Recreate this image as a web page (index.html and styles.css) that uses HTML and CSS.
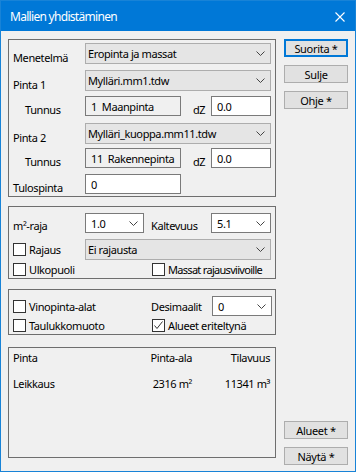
FILE: index.html
```html
<!DOCTYPE html>
<html lang="fi">
<head>
  <meta charset="UTF-8">
  <meta name="viewport" content="width=device-width, initial-scale=1.0">
  <title>Mallien yhdistäminen</title>
  <link rel="stylesheet" href="styles.css">
</head>
<body>

  <div class="window">
    <!-- otsikkopalkki -->
    <div class="titlebar">
      <span class="title">Mallien yhdistäminen</span>
      <svg class="close" width="10" height="10" viewBox="0 0 10 10">
        <path d="M0.5 0.5 L9.5 9.5 M9.5 0.5 L0.5 9.5" stroke="#fff" stroke-width="1.1" fill="none"/>
      </svg>
    </div>

    <div class="dialog">
      <div class="main">

        <!-- pinnat -->
        <div class="group g-pinnat">
          <div class="row r1">
            <span class="lbl">Menetelmä</span>
            <div class="combo gray w-wide"><span>Eropinta ja massat</span><svg class="chev" width="9" height="5" viewBox="0 0 9 5"><path d="M0.5 0.5 L4.5 4.5 L8.5 0.5" stroke="#444" fill="none"/></svg></div>
          </div>
          <div class="row r2">
            <span class="lbl">Pinta 1</span>
            <div class="combo gray w-wide"><span>Mylläri.mm1.tdw</span><svg class="chev" width="9" height="5" viewBox="0 0 9 5"><path d="M0.5 0.5 L4.5 4.5 L8.5 0.5" stroke="#444" fill="none"/></svg></div>
          </div>
          <div class="row r3">
            <span class="lbl sub">Tunnus</span>
            <div class="field ro w-tunnus">1&nbsp; Maanpinta</div>
            <span class="dz">dZ</span>
            <div class="field w-dz">0.0</div>
          </div>
          <div class="row r4">
            <span class="lbl">Pinta 2</span>
            <div class="combo gray w-wide"><span>Mylläri_kuoppa.mm11.tdw</span><svg class="chev" width="9" height="5" viewBox="0 0 9 5"><path d="M0.5 0.5 L4.5 4.5 L8.5 0.5" stroke="#444" fill="none"/></svg></div>
          </div>
          <div class="row r5">
            <span class="lbl sub">Tunnus</span>
            <div class="field ro w-tunnus">11&nbsp; Rakennepinta</div>
            <span class="dz">dZ</span>
            <div class="field w-dz">0.0</div>
          </div>
          <div class="row r6">
            <span class="lbl">Tulospinta</span>
            <div class="field w-tunnus">0</div>
          </div>
        </div>

        <!-- rajaus -->
        <div class="group g-rajaus">
          <div class="row r7">
            <span class="lbl">m²-raja</span>
            <div class="combo w-small"><span>1.0</span><svg class="chev" width="9" height="5" viewBox="0 0 9 5"><path d="M0.5 0.5 L4.5 4.5 L8.5 0.5" stroke="#444" fill="none"/></svg></div>
            <span class="lbl2">Kaltevuus</span>
            <div class="combo w-dz"><span>5.1</span><svg class="chev" width="9" height="5" viewBox="0 0 9 5"><path d="M0.5 0.5 L4.5 4.5 L8.5 0.5" stroke="#444" fill="none"/></svg></div>
          </div>
          <div class="row r8">
            <label class="check lbl"><span class="box"></span>Rajaus</label>
            <div class="combo gray w-wide"><span>Ei rajausta</span><svg class="chev" width="9" height="5" viewBox="0 0 9 5"><path d="M0.5 0.5 L4.5 4.5 L8.5 0.5" stroke="#444" fill="none"/></svg></div>
          </div>
          <div class="row r9">
            <label class="check col1"><span class="box"></span>Ulkopuoli</label>
            <label class="check tight"><span class="box"></span>Massat rajausviivoille</label>
          </div>
        </div>

        <!-- tulostus -->
        <div class="group g-tulostus">
          <div class="row r10">
            <label class="check col1"><span class="box"></span>Vinopinta-alat</label>
            <span class="lbl2">Desimaalit</span>
            <div class="combo w-dz"><span>0</span><svg class="chev" width="9" height="5" viewBox="0 0 9 5"><path d="M0.5 0.5 L4.5 4.5 L8.5 0.5" stroke="#444" fill="none"/></svg></div>
          </div>
          <div class="row r11">
            <label class="check col1"><span class="box"></span>Taulukkomuoto</label>
            <label class="check"><span class="box"><svg width="11" height="11" viewBox="0 0 11 11"><path d="M1.5 5.5 L4 8.5 L9.5 1.5" stroke="#333" fill="none"/></svg></span>Alueet eriteltynä</label>
          </div>
        </div>

        <!-- tulokset -->
        <div class="group g-tulos">
          <div class="result">
            <span>Pinta</span><span class="num">Pinta-ala</span><span class="num">Tilavuus</span>
            <span>Leikkaus</span><span class="num">2316 m²</span><span class="num">11341 m³</span>
          </div>
        </div>

      </div>

      <!-- painikkeet -->
      <div class="buttons">
        <div class="btn-top">
          <button class="btn default">Suorita *</button>
          <button class="btn">Sulje</button>
          <button class="btn">Ohje *</button>
        </div>
        <div class="btn-bottom">
          <button class="btn">Alueet *</button>
          <button class="btn">Näytä *</button>
        </div>
      </div>
    </div>
  </div>

</body>
</html>
```

FILE: styles.css
```css
body {
  margin: 0;
  padding: 0;
  font-family: "Noto Sans", Arial, sans-serif;
  font-size: 11px;
  letter-spacing: -0.4px;
  color: #000;
  background-color: #f0f0f0;
}
/* ikkuna */
.window {
  width: 356px;
  height: 472px;
  box-sizing: border-box;
  border: 1px solid #1883d7;
  background-color: #f0f0f0;
  display: flex;
  flex-direction: column;
}
.titlebar {
  height: 30px;
  background-color: #0078d7;
  display: flex;
  align-items: center;
  justify-content: space-between;
  padding: 0 10px 0 9px;
  flex-shrink: 0;
}
.title {
  color: white;
  font-size: 12px;
  letter-spacing: -0.7px;
}
.close {
  margin-top: 1px;
}
/* sisältö */
.dialog {
  flex: 1;
  display: flex;
  gap: 8px;
  padding: 8px 7px 5px 7px;
}
.main {
  width: 268px;
  display: flex;
  flex-direction: column;
}
.group {
  box-sizing: border-box;
  border: 1px solid #6e6e6e;
  padding: 0 4px;
}
.g-pinnat { height: 158px; padding-top: 3px; }
.g-rajaus { height: 73px; margin-top: 9px; padding-top: 6px; }
.g-tulostus { height: 46px; margin-top: 10px; padding-top: 6px; }
.g-tulos { height: 111px; margin-top: 12px; padding-top: 1px; }
.row {
  display: flex;
  align-items: center;
}
.r1, .r2, .r4, .r8 { height: 21px; }
.r3, .r5, .r6, .r7, .r10 { height: 20px; }
.r2 { margin-top: 6px; }
.r3 { margin-top: 5px; }
.r4 { margin-top: 7px; }
.r5 { margin-top: 4px; }
.r6 { margin-top: 6px; }
.r8 { margin-top: 6px; }
.r9 { margin-top: 3px; height: 13px; }
.r11 { margin-top: 3px; height: 13px; }
.lbl {
  width: 72px;
  flex-shrink: 0;
  padding-top: 7px;
  box-sizing: border-box;
}
.lbl.sub { padding-left: 12px; padding-top: 6px; }
.r7 .lbl { padding-top: 4px; }
.lbl2 {
  width: 60px;
  flex-shrink: 0;
  margin-left: 7px;
  padding-top: 4px;
}
.r10 .lbl2 { margin-left: 0; padding-top: 1px; width: 61px; }
.dz {
  width: 30px;
  flex-shrink: 0;
  padding-left: 12px;
  padding-top: 6px;
  box-sizing: border-box;
}
/* kentät */
.field, .combo {
  height: 100%;
  box-sizing: border-box;
  border: 1px solid #7a7a7a;
  background-color: white;
  display: flex;
  align-items: center;
  padding-left: 5px;
  white-space: nowrap;
  overflow: hidden;
  flex-shrink: 0;
}
.field.ro { background-color: #f0f0f0; }
.combo {
  justify-content: space-between;
  padding-right: 5px;
}
.combo.gray {
  background-color: #e5e5e5;
  border-color: #adadad;
  padding-left: 2px;
}
.w-wide { width: 186px; }
.w-tunnus { width: 96px; }
.w-dz { width: 60px; }
.w-small { width: 59px; }
/* valintaruudut */
.check {
  display: flex;
  align-items: center;
  gap: 3px;
  white-space: nowrap;
}
.check.tight { letter-spacing: -0.7px; }
.check.lbl { padding-top: 0; }
.col1 { width: 139px; flex-shrink: 0; }
.r10 .col1 { width: 138px; }
.box {
  width: 13px;
  height: 13px;
  flex-shrink: 0;
  box-sizing: border-box;
  border: 1px solid #333;
  background-color: white;
  display: flex;
  align-items: center;
  justify-content: center;
}
/* tulokset */
.result {
  display: grid;
  grid-template-columns: 1fr 60px 78px;
  grid-auto-rows: 16px;
  row-gap: 10px;
  align-items: center;
  padding-right: 1px;
}
.num { text-align: right; }
/* painikkeet */
.buttons {
  width: 64px;
  display: flex;
  flex-direction: column;
  justify-content: space-between;
  padding-bottom: 1px;
}
.btn-top, .btn-bottom {
  display: flex;
  flex-direction: column;
  gap: 8px;
}
.btn {
  height: 18px;
  padding: 0;
  font-family: inherit;
  font-size: 11px;
  letter-spacing: -0.3px;
  color: #000;
  background-color: #e1e1e1;
  border: 1px solid #adadad;
}
.btn.default {
  border: 2px solid #0078d7;
}
```
